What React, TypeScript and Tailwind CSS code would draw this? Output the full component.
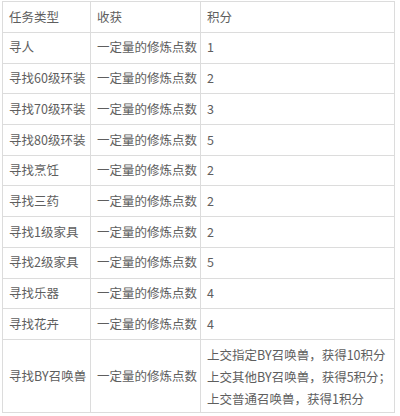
const rows: [string, string][] = [
  ["寻人", "1"],
  ["寻找60级环装", "2"],
  ["寻找70级环装", "3"],
  ["寻找80级环装", "5"],
  ["寻找烹饪", "2"],
  ["寻找三药", "2"],
  ["寻找1级家具", "2"],
  ["寻找2级家具", "5"],
  ["寻找乐器", "4"],
  ["寻找花卉", "4"],
];

const cell = "border border-[#dcdcdc] px-[6px] align-middle whitespace-nowrap";

export default function App() {
  return (
    <div
      className="w-[400px] h-[416px] bg-white pt-px pl-[2px] text-[12.5px] text-[#5e5e5e]"
      style={{ fontFamily: '"Noto Sans CJK SC", "Noto Sans", sans-serif' }}
    >
      <table className="border-collapse table-fixed w-[392px]">
        <colgroup>
          <col className="w-[88px]" />
          <col className="w-[110px]" />
          <col className="w-[194px]" />
        </colgroup>
        <tbody>
          <tr className="h-[31px]">
            <td className={cell}>任务类型</td>
            <td className={cell}>收获</td>
            <td className={cell}>积分</td>
          </tr>
          {rows.map(([task, score]) => (
            <tr key={task} className="h-[30.7px]">
              <td className={cell}>{task}</td>
              <td className={cell}>一定量的修炼点数</td>
              <td className={cell}>{score}</td>
            </tr>
          ))}
          <tr className="h-[73px]">
            <td className={cell}>寻找BY召唤兽</td>
            <td className={cell}>一定量的修炼点数</td>
            <td className={`${cell} leading-[22px] pt-[2px]`}>
              <div>上交指定BY召唤兽，获得10积分</div>
              <div>上交其他BY召唤兽，获得5积分；</div>
              <div>上交普通召唤兽，获得1积分</div>
            </td>
          </tr>
        </tbody>
      </table>
    </div>
  );
}
